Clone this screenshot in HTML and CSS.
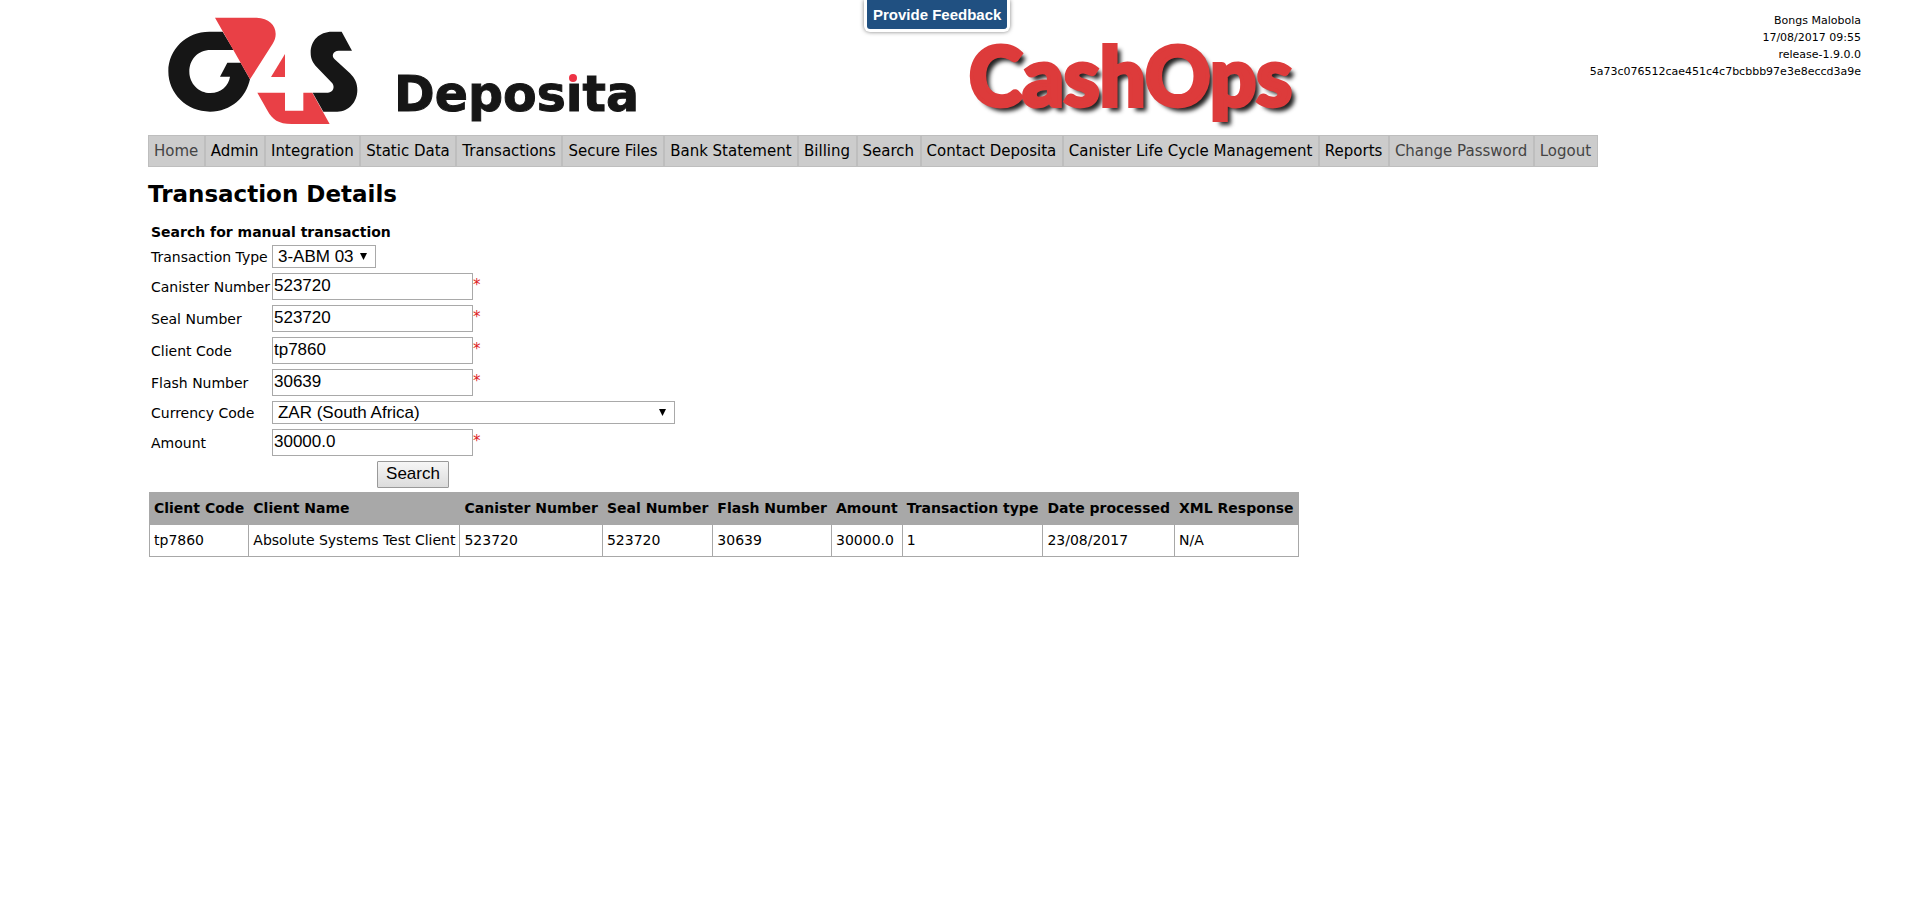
FILE: index.html
```html
<!DOCTYPE html>
<html lang="en">
<head>
<meta charset="utf-8">
<title>Transaction Details</title>
<link rel="stylesheet" href="styles.css">
</head>
<body>
<button class="feedback" type="button">Provide Feedback</button>
<header class="header">
  <svg class="brand" viewBox="0 0 500 135" width="500" height="135" role="img" aria-label="G4S Deposita">
    <g transform="translate(-8 0) scale(.33333)">
      <path fill="#161616" d="M248 95L281 150H212C172 150 148 180 148 215C148 250 176 279 211 279C244 279 266 256 270 230H240L262 188H302L330 238C318 292 274 335 210 335C140 335 85 281 85 214C85 148 139 95 208 95Z"/>
      <path fill="#e94046" d="M225 53H350C386 54 407 75 407 102C407 112 404 122 398 131L330 238Z"/>
      <path fill="#e94046" d="M435 162V231H393Z"/>
      <path fill="#e94046" d="M352 278H435V332H490V278H517L569 372H455C415 372 397 358 383 333Z"/>
      <path fill="#161616" d="M605 95L636 152H596C578 153 574 168 584 178L630 220C645 235 652 250 652 270C652 306 626 335 592 335H550L518 278H564C580 277 585 262 577 250L530 201C518 188 512 176 512 158C512 121 538 95 576 95Z"/>
    </g>
    <text class="brand-name" x="246" y="111">Deposita</text>
    <rect x="417" y="70" width="16" height="12" fill="#fff"/>
    <circle cx="425" cy="78" r="4" fill="#ee3345"/>
  </svg>
  <div class="product">CashOps</div>
  <div class="session">
    <div>Bongs Malobola</div>
    <div>17/08/2017 09:55</div>
    <div>release-1.9.0.0</div>
    <div>5a73c076512cae451c4c7bcbbb97e3e8eccd3a9e</div>
  </div>
</header>
<nav class="nav">
  <a class="muted" href="#">Home</a>
  <a href="#">Admin</a>
  <a href="#">Integration</a>
  <a href="#">Static Data</a>
  <a href="#">Transactions</a>
  <a href="#">Secure Files</a>
  <a href="#">Bank Statement</a>
  <a href="#">Billing</a>
  <a href="#">Search</a>
  <a href="#">Contact Deposita</a>
  <a href="#">Canister Life Cycle Management</a>
  <a href="#">Reports</a>
  <a class="muted" href="#">Change Password</a>
  <a class="muted" href="#">Logout</a>
</nav>
<main class="main">
  <h1>Transaction Details</h1>
  <form class="form">
    <h2>Search for manual transaction</h2>
    <label for="type">Transaction Type</label>
    <div class="field"><select id="type"><option>3-ABM 03</option></select></div>
    <label for="canister">Canister Number</label>
    <div class="field"><input id="canister" type="text" value="523720"><span class="req">*</span></div>
    <label for="seal">Seal Number</label>
    <div class="field"><input id="seal" type="text" value="523720"><span class="req">*</span></div>
    <label for="client">Client Code</label>
    <div class="field"><input id="client" type="text" value="tp7860"><span class="req">*</span></div>
    <label for="flash">Flash Number</label>
    <div class="field"><input id="flash" type="text" value="30639"><span class="req">*</span></div>
    <label for="currency">Currency Code</label>
    <div class="field"><select id="currency" class="wide"><option>ZAR (South Africa)</option></select></div>
    <label for="amount">Amount</label>
    <div class="field"><input id="amount" type="text" value="30000.0"><span class="req">*</span></div>
    <button class="search" type="button">Search</button>
  </form>
  <table class="results">
    <thead>
      <tr><th>Client Code</th><th>Client Name</th><th>Canister Number</th><th>Seal Number</th><th>Flash Number</th><th>Amount</th><th>Transaction type</th><th>Date processed</th><th>XML Response</th></tr>
    </thead>
    <tbody>
      <tr><td>tp7860</td><td>Absolute Systems Test Client</td><td>523720</td><td>523720</td><td>30639</td><td>30000.0</td><td>1</td><td>23/08/2017</td><td>N/A</td></tr>
    </tbody>
  </table>
</main>
</body>
</html>
```
FILE: styles.css
```css
* { box-sizing: border-box; }

body {
  margin: 0;
  background: #fff;
  color: #000;
  font: 14px/17px Verdana, "DejaVu Sans", sans-serif;
}

.feedback {
  position: absolute;
  top: 0;
  left: 45%;
  padding: 6px;
  border: 3px solid #fff;
  border-top: 0;
  border-radius: 0 0 6px 6px;
  background: #205081;
  box-shadow: 0 0 4px rgba(0, 0, 0, .5);
  color: #fff;
  font: bold 15px/17px Arial, "Liberation Sans", sans-serif;
}

.header {
  display: flex;
  padding: 0 59px 0 148px;
}

.brand { flex: none; }

.brand-name {
  fill: #161616;
  stroke: #161616;
  stroke-width: 1px;
  font: bold 49px "DejaVu Sans", sans-serif;
}

.product {
  margin: 36px 0 0 321px;
  color: #dd3b3b;
  font: 900 81px/78px Lato, sans-serif;
  -webkit-text-stroke: 4px #dd3b3b;
  text-shadow: 5px 5px 4px #222;
}

.session {
  margin-left: auto;
  padding-top: 12px;
  font-size: 11px;
  text-align: right;
}

.nav {
  display: flex;
  width: 75.5%;
  min-width: max-content;
  margin-left: 148px;
  border: 1px solid #bebebe;
  background: #ccc;
}

.nav a {
  flex: 1 0 auto;
  padding: 0 5px;
  border-left: 2px solid #bebebe;
  color: #000;
  font-size: 15px;
  line-height: 30px;
  text-decoration: none;
  white-space: nowrap;
}

.nav a:first-child { border-left: 0; }
.nav .muted { color: #444; }

.main { padding: 13px 148px; }

h1 {
  margin: 0 0 17px;
  font-size: 23px;
  line-height: 28px;
}

.form {
  display: grid;
  grid-template-columns: max-content max-content;
  gap: 5px 2px;
  width: max-content;
  padding-left: 3px;
}

h2 {
  grid-column: 1 / -1;
  margin: 0;
  font-size: 14px;
  line-height: 15px;
}

label {
  align-self: center;
  padding-top: 2px;
}

.field { display: flex; }

.field input {
  width: 201px;
  height: 27px;
  padding: 0 1px 2px;
}

.field input,
.field select {
  border: 1px solid #a9a9a9;
  border-radius: 0;
  background-color: #fff;
  color: #000;
  font: 17px/20px Arial, "Liberation Sans", sans-serif;
}

.field select {
  height: 23px;
  padding: 0 21px 0 5px;
  appearance: none;
  background-image: url("data:image/svg+xml,%3Csvg xmlns='http://www.w3.org/2000/svg' width='7' height='7'%3E%3Cpath d='M0 0H7L3.5 7Z'/%3E%3C/svg%3E");
  background-repeat: no-repeat;
  background-position: right 8px center;
}

.field .wide { width: 403px; }

.req {
  padding-top: 4px;
  color: #d22;
  font-size: 15px;
}

.search {
  grid-column: 1 / -1;
  justify-self: center;
  width: 72px;
  height: 27px;
  padding: 0 0 2px;
  border: 1px solid #999;
  border-radius: 1px;
  background: linear-gradient(#f6f6f6, #dcdcdc);
  color: #000;
  font: 17px/20px Arial, "Liberation Sans", sans-serif;
}

.results {
  margin: 4px 0 0 1px;
  border-collapse: collapse;
  font-size: 14px;
  white-space: nowrap;
}

.results th,
.results td {
  height: 32px;
  padding: 0 4px;
  border: 1px solid #a8a8a8;
  text-align: left;
}

.results th { background: #a8a8a8; }
```
